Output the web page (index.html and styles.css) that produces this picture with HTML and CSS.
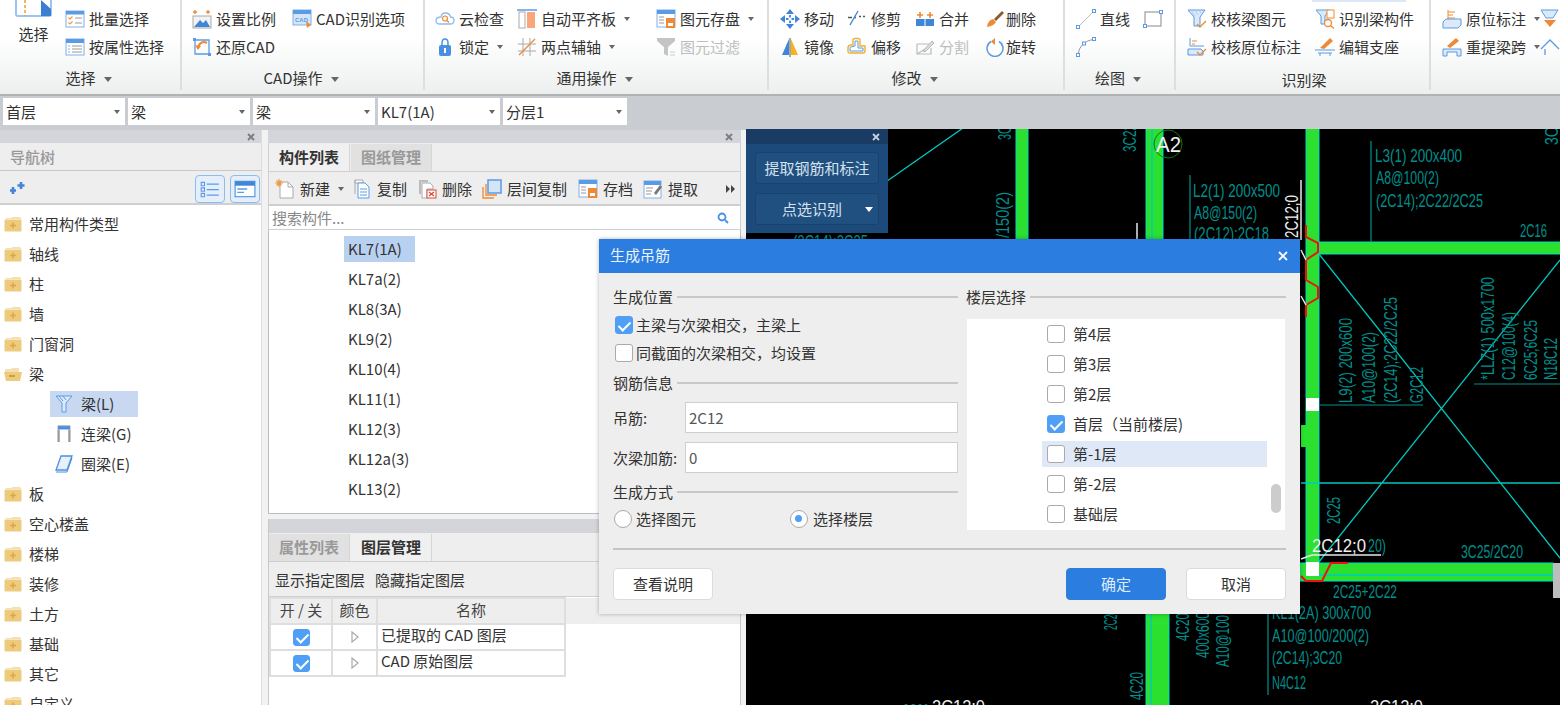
FILE: index.html
```html
<!DOCTYPE html>
<html lang="zh-CN">
<head>
<meta charset="utf-8">
<title>生成吊筋</title>
<link rel="stylesheet" href="styles.css">
</head>
<body>
<svg class="defs" width="0" height="0" aria-hidden="true">
  <symbol id="folder" viewBox="0 0 18 16"><path d="M1 3.500Q1 2 2.500 2H7L8.500 1H15.500Q17 1 17 2.500V3H1Z" fill="#f3dfb0"/><rect x="0.500" y="3.500" width="17" height="12" rx="1" fill="#eecb7c"/><path d="M9 6.500V12.500M6 9.500H12" stroke="#dba94c" stroke-width="1.600"/></symbol>
  <symbol id="close" viewBox="0 0 8 8"><path d="M1 1L7 7M7 1L1 7" stroke="currentColor" stroke-width="1.800"/></symbol>
</svg>

<header class="ribbon">
  <div class="peek"></div>
  <section class="group g1">
    <div class="rows">
      <div class="big">
        <svg class="big-ic" viewBox="0 0 37 17"><rect x="1" y="-5" width="35" height="21" rx="2" fill="#fff" stroke="#9cc4f0" stroke-width="2"/><path d="M10 0V16" stroke="#f0a030" stroke-width="1.500" stroke-dasharray="3 2"/><path d="M26 0L36 9V16H26Z" fill="#3b7fd0"/></svg>
        <span class="big-t">选择</span>
      </div>
      <div class="stack">
        <div class="item"><svg class="ic" viewBox="0 0 20 20"><rect x="1" y="2" width="18" height="16" fill="#fff" stroke="#7fb0ea"/><rect x="1" y="2" width="18" height="3.500" fill="#5a9be6"/><path d="M3.500 8.500L5 10L7.500 7.500M3.500 13.500L5 15L7.500 12.500" fill="none" stroke="#ef9a3c" stroke-width="1.200"/><path d="M10 9H17M10 14H17" stroke="#999"/></svg><span>批量选择</span></div>
        <div class="item"><svg class="ic" viewBox="0 0 20 20"><rect x="1" y="2" width="18" height="16" fill="#fff" stroke="#7fb0ea"/><rect x="1" y="2" width="18" height="4" fill="#5a9be6"/><path d="M7 9H17M7 12H17M7 15H17" stroke="#999"/><path d="M3 9H5M3 12H5M3 15H5" stroke="#7fb0ea"/></svg><span>按属性选择</span></div>
      </div>
    </div>
    <div class="glabel">选择<i class="arr"></i></div>
  </section>

  <section class="group g2">
    <div class="rows">
      <div class="stack">
        <div class="item"><svg class="ic" viewBox="0 0 20 20"><path d="M3 1V5M1 3H5M16 1V5M14 3H18" stroke="#ee8a35" stroke-width="1.300"/><rect x="1" y="7" width="18" height="12" fill="#f2f2f2" stroke="#aaa"/><path d="M2 18L8 11L11 14L14 11L18 18Z" fill="#3f86d8"/></svg><span>设置比例</span></div>
        <div class="item"><svg class="ic" viewBox="0 0 20 20"><path d="M3 3H17V17H3Z" fill="none" stroke="#5a9be6" stroke-width="1.300"/><rect x="1" y="1" width="3" height="3" fill="#5a9be6"/><rect x="16" y="16" width="3" height="3" fill="#5a9be6"/><path d="M15 6Q9 3 6 10" fill="none" stroke="#ee8a35" stroke-width="2"/><path d="M3 8L9 9L6 13Z" fill="#ee8a35"/></svg><span>还原CAD</span></div>
      </div>
      <div class="stack">
        <div class="item"><svg class="ic" viewBox="0 0 20 20"><rect x="1" y="1" width="18" height="15" fill="#d5e5f8" stroke="#7fb0ea"/><rect x="1" y="1" width="18" height="4" fill="#5a9be6"/><text class="cadmini" x="3" y="13">CAD</text><path d="M14 12L19 16L15 19Z" fill="#ee8a35"/></svg><span>CAD识别选项</span></div>
      </div>
    </div>
    <div class="glabel">CAD操作<i class="arr"></i></div>
  </section>

  <section class="group g3">
    <div class="rows">
      <div class="stack">
        <div class="item"><svg class="ic" viewBox="0 0 20 20"><path d="M5 15H15Q19 15 19 11.500Q19 8 15.500 8Q14.500 4 10.500 4Q6.500 4 6 8Q1 8 1 11.500Q1 15 5 15Z" fill="#fff" stroke="#8abcee" stroke-width="1.300"/><circle cx="10" cy="9.500" r="2.500" fill="none" stroke="#ee8a35" stroke-width="1.200"/><path d="M12 11.500L14 13.500" stroke="#ee8a35" stroke-width="1.200"/></svg><span>云检查</span></div>
        <div class="item"><svg class="ic" viewBox="0 0 20 20"><path d="M13 10V6Q13 2 10 2Q7 2 7 6V10" fill="none" stroke="#4a90e2" stroke-width="1.500"/><rect x="4" y="8" width="12" height="11" rx="2" fill="#4a90e2"/><rect x="9" y="11" width="2" height="5" fill="#fff"/></svg><span>锁定</span><i class="arr"></i></div>
      </div>
      <div class="stack">
        <div class="item"><svg class="ic" viewBox="0 0 20 20"><path d="M0 1H20" stroke="#5a9be6" stroke-width="1.500"/><rect x="2" y="3" width="6" height="16" fill="#fff" stroke="#aaa"/><rect x="10" y="3" width="8" height="16" fill="#f9a77a"/></svg><span>自动平齐板</span><i class="arr"></i></div>
        <div class="item"><svg class="ic" viewBox="0 0 20 20"><path d="M6 1V19M13 1V19M1 7H19M1 14H19" stroke="#aaa"/><path d="M2 18L18 2" stroke="#ee8a35" stroke-width="1.200"/></svg><span>两点辅轴</span><i class="arr"></i></div>
      </div>
      <div class="stack">
        <div class="item"><svg class="ic" viewBox="0 0 20 20"><rect x="1" y="1" width="18" height="17" fill="#fff" stroke="#7fb0ea"/><rect x="1" y="1" width="18" height="4" fill="#5a9be6"/><path d="M3 8H8M3 11H8M3 14H8" stroke="#999"/><rect x="10" y="9" width="9" height="10" fill="#ee8a35"/><rect x="12" y="14" width="5" height="3" fill="#fff"/></svg><span>图元存盘</span><i class="arr"></i></div>
        <div class="item off"><svg class="ic" viewBox="0 0 20 20"><path d="M1 1H19V4L12 10V19L8 17V10L1 4Z" fill="#c4c4c4"/><path d="M14 15H19M14 18H19" stroke="#ccc"/></svg><span>图元过滤</span></div>
      </div>
    </div>
    <div class="glabel">通用操作<i class="arr"></i></div>
  </section>

  <section class="group g4">
    <div class="rows">
      <div class="stack">
        <div class="item"><svg class="ic" viewBox="0 0 20 20"><path d="M10 0L14 5H6ZM10 20L6 15H14ZM0 10L5 6V14ZM20 10L15 14V6Z" fill="#3f86d8"/><path d="M10 6V8.500M10 11.500V14M6 10H8.500M11.500 10H14" stroke="#3f86d8" stroke-width="1.800"/></svg><span>移动</span></div>
        <div class="item"><svg class="ic" viewBox="0 0 20 20"><path d="M9 18V2L2 18Z" fill="#3f86d8"/><path d="M11 2V18H18Z" fill="#f7b21c"/><path d="M10 1V20" stroke="#555"/></svg><span>镜像</span></div>
      </div>
      <div class="stack">
        <div class="item"><svg class="ic" viewBox="0 0 20 20"><path d="M1 8.500H5M7 8.500H9" stroke="#555" stroke-width="1.300"/><path d="M3 16L11 2" stroke="#3f86d8" stroke-width="1.400"/><path d="M12 7.500H14M16 7.500H18" stroke="#555" stroke-width="1.300"/></svg><span>修剪</span></div>
        <div class="item"><svg class="ic" viewBox="0 0 20 20"><path d="M6 8V3.500Q6 1.500 8 1.500H11Q13 1.500 13 3.500V9H18V14Q18 16 16 16H3Q1 16 1 14V11Q1 8 4 8Z" fill="#fff" stroke="#f0b030" stroke-width="1.400"/><path d="M8 9V4H11V11H16V14H3V11Q3 10 4 10Z" fill="#fff" stroke="#5a9be6"/></svg><span>偏移</span></div>
      </div>
      <div class="stack">
        <div class="item"><svg class="ic" viewBox="0 0 20 20"><rect x="1" y="10" width="8.500" height="7" fill="#3f86d8"/><rect x="10.500" y="10" width="8.500" height="7" fill="#3f86d8"/><path d="M5 3V9M2 6H8M15 3V9M12 6H18" stroke="#ee8a35" stroke-width="1.600"/></svg><span>合并</span></div>
        <div class="item off"><svg class="ic" viewBox="0 0 20 20"><path d="M2 7H14M2 7V17H16V11M2 17L12 11" fill="none" stroke="#bbb" stroke-width="1.200"/><path d="M8 14L17 4L19 6L10 15Z" fill="#ddd" stroke="#aaa" stroke-width=".8"/></svg><span>分割</span></div>
      </div>
      <div class="stack">
        <div class="item"><svg class="ic" viewBox="0 0 20 20"><path d="M9 10L17 2L19 4L11 12Z" fill="#8a5a2a"/><path d="M2 18Q3 11 8 10L11 13Q9 17 2 18Z" fill="#ee8a35"/></svg><span>删除</span></div>
        <div class="item"><svg class="ic" viewBox="0 0 20 20"><path d="M6 4.500A8 8 0 1 0 14 4.500" fill="#fff" stroke="#5a9be6" stroke-width="1.500"/><path d="M10 1L6 4.500L10 8Z" fill="#ee8a35"/></svg><span>旋转</span></div>
      </div>
    </div>
    <div class="glabel">修改<i class="arr"></i></div>
  </section>

  <section class="group g5">
    <div class="rows">
      <div class="stack">
        <div class="item"><svg class="ic" viewBox="0 0 20 20"><path d="M2 18L18 2" stroke="#bbb"/><rect x="0.500" y="16.500" width="3" height="3" fill="#fff" stroke="#5a9be6"/><rect x="16.500" y="0.500" width="3" height="3" fill="#fff" stroke="#5a9be6"/></svg><span>直线</span></div>
        <div class="item"><svg class="ic" viewBox="0 0 20 20"><path d="M2 18Q3 5 18 2" fill="none" stroke="#999"/><rect x="0.500" y="16.500" width="3" height="3" fill="#fff" stroke="#5a9be6"/><rect x="6.500" y="5" width="3" height="3" fill="#fff" stroke="#5a9be6"/><rect x="16.500" y="0.500" width="3" height="3" fill="#fff" stroke="#5a9be6"/></svg></div>
      </div>
      <div class="stack">
        <div class="item"><svg class="ic" viewBox="0 0 20 20"><rect x="2" y="3" width="16" height="14" fill="none" stroke="#888"/><rect x="16.500" y="1.500" width="3" height="3" fill="#fff" stroke="#5a9be6"/><rect x="0.500" y="15.500" width="3" height="3" fill="#fff" stroke="#5a9be6"/></svg></div>
      </div>
    </div>
    <div class="glabel">绘图<i class="arr"></i></div>
  </section>

  <section class="group g6">
    <div class="rows">
      <div class="stack">
        <div class="item"><svg class="ic" viewBox="0 0 20 20"><path d="M1 1H18L13 8V17H7V8Z" fill="#dbe9f8" stroke="#5a9be6"/><path d="M4 1L8 7M8 1L11 6M12 1L14 4" stroke="#a9ccf2"/><path d="M10 15L13 18L19 12" fill="none" stroke="#ee8a35" stroke-width="1.400"/></svg><span>校核梁图元</span></div>
        <div class="item"><svg class="ic" viewBox="0 0 20 20"><path d="M3 1V9H17" fill="none" stroke="#5a9be6"/><path d="M5 4H10M5 7H8" stroke="#ee8a35"/><path d="M1 12H14L16 14V18H1Z" fill="#dbe9f8" stroke="#5a9be6"/><path d="M10 15L13 18L19 12" fill="none" stroke="#ee8a35" stroke-width="1.400"/></svg><span>校核原位标注</span></div>
      </div>
      <div class="stack">
        <div class="item"><svg class="ic" viewBox="0 0 20 20"><path d="M1 1H14L10 7V15H6V7Z" fill="#dbe9f8" stroke="#5a9be6"/><rect x="12" y="1" width="7" height="8" fill="#fff" stroke="#ee8a35"/><circle cx="13" cy="14" r="3.500" fill="#fff" stroke="#ee8a35" stroke-width="1.300"/><path d="M15.500 16.500L19 19.500" stroke="#ee8a35" stroke-width="1.300"/></svg><span>识别梁构件</span></div>
        <div class="item"><svg class="ic" viewBox="0 0 20 20"><path d="M5 11L15 1L18 4L9 12Z" fill="#ee8a35"/><path d="M0 13H20M3 16H17" stroke="#5a9be6" stroke-width="1.200"/><path d="M5 16V19M15 16V19" stroke="#5a9be6"/></svg><span>编辑支座</span></div>
      </div>
    </div>
    <div class="glabel low">识别梁</div>
  </section>

  <section class="group g7">
    <div class="rows">
      <div class="stack">
        <div class="item"><svg class="ic" viewBox="0 0 20 20"><path d="M6 1V11M6 3H13M6 6H11M6 9H13" fill="none" stroke="#ee8a35"/><path d="M1 13L4 10H19V16L16 19H1Z" fill="#dbe9f8" stroke="#5a9be6"/></svg><span>原位标注</span><i class="arr"></i></div>
        <div class="item"><svg class="ic" viewBox="0 0 20 20"><path d="M5 9L14 1L17 4L8 11Z" fill="#ee8a35"/><path d="M1 19V12H19V19H15V15H5V19Z" fill="#dbe9f8" stroke="#5a9be6"/></svg><span>重提梁跨</span><i class="arr"></i></div>
      </div>
      <div class="stack">
        <div class="item"><svg class="ic" viewBox="0 0 20 20"><path d="M1 1H18L13 9H6Z" fill="#dbe9f8" stroke="#5a9be6"/><path d="M4 11H16L10 18Z" fill="#ee8a35"/></svg></div>
        <div class="item"><svg class="ic" viewBox="0 0 20 20"><path d="M1 12L10 3L19 12M5 12V18" fill="none" stroke="#5a9be6" stroke-width="1.300"/></svg></div>
      </div>
    </div>
  </section>
</header>

<div class="combos">
  <div class="combo">首层<i class="arr"></i></div>
  <div class="combo">梁<i class="arr"></i></div>
  <div class="combo">梁<i class="arr"></i></div>
  <div class="combo">KL7(1A)<i class="arr"></i></div>
  <div class="combo wide">分层1<i class="arr"></i></div>
</div>

<main class="main">
  <aside class="nav pane">
    <div class="strip"><svg class="x"><use href="#close"/></svg></div>
    <div class="nav-title">导航树</div>
    <div class="nav-tools">
      <svg class="spark" viewBox="0 0 16 13"><path d="M4 5V12M1 8.500H7" stroke="#3f86d8" stroke-width="2.600"/><path d="M12 0V7M8.500 3.500H15.500" stroke="#3f86d8" stroke-width="2.600"/></svg>
      <div class="tool-btns">
        <div class="tbtn"><svg viewBox="0 0 20 16"><path d="M2 2H5V5H2ZM2 7H5V10H2ZM2 12H5V15H2Z" fill="none" stroke="#5a9be6"/><path d="M7 3.500H18M7 8.500H18M7 13.500H18" stroke="#5a9be6" stroke-width="1.200"/></svg></div>
        <div class="tbtn"><svg viewBox="0 0 20 16"><rect x="1" y="1" width="18" height="14" fill="#fff" stroke="#4a90e2"/><rect x="1" y="1" width="18" height="4" fill="#3f86d8"/><path d="M3 8H12M3 11H9" stroke="#5a9be6" stroke-width="1.200"/></svg></div>
      </div>
    </div>
    <div class="tree">
      <div class="node"><svg class="fold"><use href="#folder"/></svg>常用构件类型</div>
      <div class="node"><svg class="fold"><use href="#folder"/></svg>轴线</div>
      <div class="node"><svg class="fold"><use href="#folder"/></svg>柱</div>
      <div class="node"><svg class="fold"><use href="#folder"/></svg>墙</div>
      <div class="node"><svg class="fold"><use href="#folder"/></svg>门窗洞</div>
      <div class="node"><svg class="fold" viewBox="0 0 18 16"><path d="M1 3H7L8 2H15V6H1Z" fill="#f3dfb0"/><path d="M0 6H18L16 15H2Z" fill="#eecb7c"/><path d="M5 10H11" stroke="#b99038" stroke-width="1.500"/></svg>梁</div>
      <div class="node sub"><div class="sub-in on"><svg class="fold" viewBox="0 0 18 18"><path d="M1 1H17L11 8V17H7V8Z" fill="#dbe9f8" stroke="#5a9be6"/><path d="M4 1L8 6M8 1L11 5" stroke="#5a9be6"/></svg>梁(L)</div></div>
      <div class="node sub"><div class="sub-in"><svg class="fold" viewBox="0 0 18 20"><rect x="2" y="1" width="14" height="4" fill="#4a90e2"/><path d="M3 5V19M15 5V19" stroke="#999" stroke-width="2.500"/><path d="M2 1H16" stroke="#999"/></svg>连梁(G)</div></div>
      <div class="node sub"><div class="sub-in"><svg class="fold" viewBox="0 0 18 18"><path d="M6 1H17L12 15H1Z" fill="#e8f1fb" stroke="#4a90e2" stroke-width="1.300"/><path d="M1 17H12L17 3" fill="none" stroke="#4a90e2"/></svg>圈梁(E)</div></div>
      <div class="node"><svg class="fold"><use href="#folder"/></svg>板</div>
      <div class="node"><svg class="fold"><use href="#folder"/></svg>空心楼盖</div>
      <div class="node"><svg class="fold"><use href="#folder"/></svg>楼梯</div>
      <div class="node"><svg class="fold"><use href="#folder"/></svg>装修</div>
      <div class="node"><svg class="fold"><use href="#folder"/></svg>土方</div>
      <div class="node"><svg class="fold"><use href="#folder"/></svg>基础</div>
      <div class="node"><svg class="fold"><use href="#folder"/></svg>其它</div>
      <div class="node"><svg class="fold"><use href="#folder"/></svg>自定义</div>
    </div>
  </aside>

  <div class="mid">
    <section class="pane upper">
      <div class="strip"><svg class="x"><use href="#close"/></svg></div>
      <div class="tabs"><div class="tab on">构件列表</div><div class="tab">图纸管理</div></div>
      <div class="comp-tools">
        <div class="item"><svg class="ic" viewBox="0 0 20 20"><path d="M5 3H13L18 8V19H5Z" fill="#fff" stroke="#aaa"/><path d="M13 3V8H18" fill="none" stroke="#aaa"/><path d="M4 0V8M0 4H8M1.500 1.500L6.500 6.500M6.500 1.500L1.500 6.500" stroke="#ee9a3c" stroke-width="1.200"/></svg><span>新建</span><i class="arr"></i></div>
        <div class="item"><svg class="ic" viewBox="0 0 20 20"><path d="M3 1H11V4H3Z" fill="#fff" stroke="#aaa"/><path d="M3 1V15" stroke="#aaa"/><path d="M6 4H13L17 8V19H6Z" fill="#fff" stroke="#5a9be6"/><path d="M8 10H15M8 13H15M8 16H15" stroke="#5a9be6"/></svg><span>复制</span></div>
        <div class="item"><svg class="ic" viewBox="0 0 20 20"><path d="M2 1H11V3H4V15H2Z" fill="#bbb"/><path d="M5 4H13L16 7V10H10V19H5Z" fill="#fff" stroke="#aaa"/><rect x="10" y="11" width="9" height="8" fill="#fff" stroke="#d84a3a"/><path d="M12 13L17 17M17 13L12 17" stroke="#d84a3a" stroke-width="1.300"/></svg><span>删除</span></div>
        <div class="item"><svg class="ic" viewBox="0 0 20 20"><rect x="6" y="1" width="13" height="13" fill="#d5e5f8" stroke="#5a9be6" stroke-width="1.500"/><path d="M4 5V16H15M1 8V19H12" fill="none" stroke="#ee8a35" stroke-width="1.300"/></svg><span>层间复制</span></div>
        <div class="item"><svg class="ic" viewBox="0 0 20 20"><rect x="1" y="1" width="18" height="17" fill="#fff" stroke="#7fb0ea"/><rect x="1" y="1" width="18" height="4" fill="#5a9be6"/><path d="M3 8H8M3 11H8M3 14H8" stroke="#999"/><rect x="10" y="9" width="9" height="10" fill="#ee8a35"/><rect x="12" y="14" width="5" height="3" fill="#fff"/></svg><span>存档</span></div>
        <div class="item"><svg class="ic" viewBox="0 0 20 20"><rect x="1" y="2" width="17" height="17" fill="#fff" stroke="#7fb0ea"/><rect x="1" y="2" width="17" height="4" fill="#5a9be6"/><path d="M3 9H10M3 12H9M3 15H8" stroke="#999"/><path d="M11 14L17 6L19 8L13 16Z" fill="#777"/></svg><span>提取</span></div>
        <svg class="more" viewBox="0 0 9 8"><path d="M0 0L4 4L0 8ZM5 0L9 4L5 8Z" fill="#444"/></svg>
      </div>
      <div class="search"><span>搜索构件...</span><svg class="mag" viewBox="0 0 12 12"><circle cx="5" cy="5" r="3.500" fill="none" stroke="#4a90e2" stroke-width="1.800"/><path d="M8 8L11 11" stroke="#4a90e2" stroke-width="2"/></svg></div>
      <div class="clist">
        <div class="crow on">KL7(1A)</div>
        <div class="crow">KL7a(2)</div>
        <div class="crow">KL8(3A)</div>
        <div class="crow">KL9(2)</div>
        <div class="crow">KL10(4)</div>
        <div class="crow">KL11(1)</div>
        <div class="crow">KL12(3)</div>
        <div class="crow">KL12a(3)</div>
        <div class="crow">KL13(2)</div>
      </div>
    </section>

    <section class="pane lower">
      <div class="strip"></div>
      <div class="tabs"><div class="tab">属性列表</div><div class="tab on">图层管理</div></div>
      <div class="layer-tools"><span>显示指定图层</span><span>隐藏指定图层</span></div>
      <table class="layers">
        <tr><th class="c1">开 / 关</th><th class="c2">颜色</th><th class="c3">名称</th><th class="rest"></th></tr>
        <tr><td class="mid-c"><span class="cb on small"></span></td><td class="mid-c"><svg class="tri" viewBox="0 0 8 12"><path d="M1 1L7 6L1 11Z" fill="#fff" stroke="#aaa" stroke-width="1.200"/></svg></td><td>已提取的 CAD 图层</td><td class="rest"></td></tr>
        <tr><td class="mid-c"><span class="cb on small"></span></td><td class="mid-c"><svg class="tri" viewBox="0 0 8 12"><path d="M1 1L7 6L1 11Z" fill="#fff" stroke="#aaa" stroke-width="1.200"/></svg></td><td>CAD 原始图层</td><td class="rest"></td></tr>
      </table>
    </section>
  </div>

  <div class="canvas">
    <svg class="cad" viewBox="746 129 814 576">
      <rect x="746" y="129" width="814" height="576" fill="#000"/>
      <g class="beam">
        <rect x="1016" y="120" width="12" height="137"/>
        <rect x="1146" y="120" width="17" height="137"/>
        <rect x="1146" y="600" width="23" height="110"/>
        <rect x="1306" y="120" width="13" height="452"/>
        <rect x="1319" y="242" width="250" height="12"/>
        <rect x="1300" y="563" width="253" height="18"/>
      </g>
      <rect class="patch" x="1301" y="425" width="16" height="22"/>
      <g class="cy">
        <path d="M1152 127V250M1151 600V705M1306 575H1553"/>
        <path d="M1319 254L1560 558M1560 260L1318 563M1301 483H1560M880 186L963 128"/>
      </g>
      <g class="tl">
        <path d="M1371 141V242M1319 405H1423M1474 384H1560M1190 175V240M1268 610V695"/>
      </g>
      <rect x="1306" y="398" width="13" height="13" fill="#fff"/>
      <rect x="1306" y="562" width="13" height="14" fill="#fff"/>
      <rect x="1553" y="563" width="7" height="35" fill="#bdbdbd"/>
      <circle cx="1168" cy="144" r="14" fill="none" stroke="#0a7a10"/>
      <g class="red">
        <path d="M1306 225V237L1318 243V252L1306 260V280L1318 287V298L1306 305V317"/>
        <path d="M1301 576L1306 581H1322L1331 563H1348"/>
      </g>
      <g class="wl">
        <path d="M1301 180V240M1137 223V240M1301 559L1312 555H1381M1301 250L1306 260M1301 296L1306 305"/>
      </g>
      <g class="tt">
        <text x="1193" y="197" textLength="87" lengthAdjust="spacingAndGlyphs">L2(1) 200x500</text>
        <text x="1194" y="219" textLength="63" lengthAdjust="spacingAndGlyphs">A8@150(2)</text>
        <text x="1194" y="240" textLength="75" lengthAdjust="spacingAndGlyphs">(2C12);2C18</text>
        <text x="793" y="248" textLength="75" lengthAdjust="spacingAndGlyphs">(2C14);2C25</text>
        <text x="1375" y="162" textLength="87" lengthAdjust="spacingAndGlyphs">L3(1) 200x400</text>
        <text x="1376" y="184" textLength="63" lengthAdjust="spacingAndGlyphs">A8@100(2)</text>
        <text x="1376" y="207" textLength="107" lengthAdjust="spacingAndGlyphs">(2C14);2C22/2C25</text>
        <text x="1520" y="237" textLength="27" lengthAdjust="spacingAndGlyphs">2C16</text>
        <text x="1461" y="558" textLength="62" lengthAdjust="spacingAndGlyphs">3C25/2C20</text>
        <text x="1368" y="552" textLength="18" lengthAdjust="spacingAndGlyphs">20)</text>
        <text x="1333" y="598" textLength="64" lengthAdjust="spacingAndGlyphs">2C25+2C22</text>
        <text x="1272" y="619" textLength="99" lengthAdjust="spacingAndGlyphs">KL1(2A) 300x700</text>
        <text x="1272" y="642" textLength="97" lengthAdjust="spacingAndGlyphs">A10@100/200(2)</text>
        <text x="1272" y="664" textLength="70" lengthAdjust="spacingAndGlyphs">(2C14);3C20</text>
        <text x="1272" y="689" textLength="34" lengthAdjust="spacingAndGlyphs">N4C12</text>
        <text x="903" y="717" textLength="26" lengthAdjust="spacingAndGlyphs">2C20</text>
        <text transform="translate(1011 140) rotate(-90)" textLength="14" lengthAdjust="spacingAndGlyphs">3C</text>
        <text transform="translate(1009 238) rotate(-90)" textLength="46" lengthAdjust="spacingAndGlyphs">/150(2)</text>
        <text transform="translate(1136 152) rotate(-90)" textLength="28" lengthAdjust="spacingAndGlyphs">3C22</text>
        <text transform="translate(1352 403) rotate(-90)" textLength="85" lengthAdjust="spacingAndGlyphs">L9(2) 200x600</text>
        <text transform="translate(1375 403) rotate(-90)" textLength="71" lengthAdjust="spacingAndGlyphs">A10@100(2)</text>
        <text transform="translate(1397 403) rotate(-90)" textLength="106" lengthAdjust="spacingAndGlyphs">(2C14);2C22/2C25</text>
        <text transform="translate(1423 403) rotate(-90)" textLength="36" lengthAdjust="spacingAndGlyphs">G2C12</text>
        <text transform="translate(1494 380) rotate(-90)" textLength="103" lengthAdjust="spacingAndGlyphs">*LLZ(1) 500x1700</text>
        <text transform="translate(1515 380) rotate(-90)" textLength="68" lengthAdjust="spacingAndGlyphs">C12@100(4)</text>
        <text transform="translate(1537 380) rotate(-90)" textLength="60" lengthAdjust="spacingAndGlyphs">6C25;6C25</text>
        <text transform="translate(1557 380) rotate(-90)" textLength="42" lengthAdjust="spacingAndGlyphs">N18C12</text>
        <text transform="translate(1340 524) rotate(-90)" textLength="27" lengthAdjust="spacingAndGlyphs">2C25</text>
        <text transform="translate(1117 630) rotate(-90)" textLength="20" lengthAdjust="spacingAndGlyphs">2C20</text>
        <text transform="translate(1143 700) rotate(-90)" textLength="28" lengthAdjust="spacingAndGlyphs">4C20</text>
        <text transform="translate(1189 641) rotate(-90)" textLength="28" lengthAdjust="spacingAndGlyphs">4C20</text>
        <text transform="translate(1209 658) rotate(-90)" textLength="46" lengthAdjust="spacingAndGlyphs">400x600</text>
        <text transform="translate(1229 667) rotate(-90)" textLength="52" lengthAdjust="spacingAndGlyphs">A10@100</text>
        <text transform="translate(1558 145) rotate(-90)" textLength="18" lengthAdjust="spacingAndGlyphs">3C</text>
      </g>
      <g class="wt">
        <text class="a2" x="1156" y="152" textLength="25" lengthAdjust="spacingAndGlyphs">A2</text>
        <text x="1312" y="552" textLength="54" lengthAdjust="spacingAndGlyphs">2C12;0</text>
        <text x="932" y="713" textLength="53" lengthAdjust="spacingAndGlyphs">2C12;0</text>
        <text x="1370" y="713" textLength="53" lengthAdjust="spacingAndGlyphs">2C12;0</text>
        <text transform="translate(1298 238) rotate(-90)" textLength="43" lengthAdjust="spacingAndGlyphs">2C12;0</text>
      </g>
    </svg>

    <div class="float">
      <div class="float-head"><svg class="x"><use href="#close"/></svg></div>
      <div class="fbtn">提取钢筋和标注</div>
      <div class="fbtn split"><span>点选识别</span><i class="farr"></i></div>
    </div>
  </div>
</main>

<div class="dialog">
  <div class="dlg-title"><span>生成吊筋</span><svg class="dlg-x" viewBox="0 0 10 10"><path d="M1 1L9 9M9 1L1 9" stroke="#fff" stroke-width="1.800"/></svg></div>
  <div class="dlg-body">
    <div class="dlg-cols">
      <div class="col-l">
        <div class="legend"><span>生成位置</span></div>
        <div class="opt first"><span class="cb on"></span>主梁与次梁相交，主梁上</div>
        <div class="opt"><span class="cb"></span>同截面的次梁相交，均设置</div>
        <div class="legend sp5"><span>钢筋信息</span></div>
        <div class="field f1"><label>吊筋:</label><div class="input">2C12</div></div>
        <div class="field"><label>次梁加筋:</label><div class="input">0</div></div>
        <div class="legend sp9"><span>生成方式</span></div>
        <div class="radios">
          <div class="opt"><span class="rd"></span>选择图元</div>
          <div class="opt"><span class="rd on"></span>选择楼层</div>
        </div>
      </div>
      <div class="col-r">
        <div class="legend"><span>楼层选择</span></div>
        <div class="floors">
          <div class="floor"><span class="cb"></span>第4层</div>
          <div class="floor"><span class="cb"></span>第3层</div>
          <div class="floor"><span class="cb"></span>第2层</div>
          <div class="floor"><span class="cb on"></span>首层（当前楼层)</div>
          <div class="floor hl"><span class="cb"></span>第-1层</div>
          <div class="floor"><span class="cb"></span>第-2层</div>
          <div class="floor"><span class="cb"></span>基础层</div>
          <div class="thumb"></div>
        </div>
      </div>
    </div>
    <div class="dlg-rule"></div>
    <div class="dlg-foot">
      <div class="btn">查看说明</div>
      <div class="foot-r"><div class="btn primary">确定</div><div class="btn">取消</div></div>
    </div>
  </div>
</div>
</body>
</html>
```
FILE: styles.css
```css
* { box-sizing: border-box; }
html, body { margin: 0; padding: 0; }
body {
  width: 1560px;
  height: 705px;
  overflow: hidden;
  position: relative;
  font-family: "Noto Sans CJK SC", "Noto Sans", sans-serif;
  font-size: 15px;
  line-height: 20px;
  color: #333;
  background: #f2f2f2;
}
.defs { position: absolute; }
i { font-style: normal; }

/* ribbon */
.ribbon {
  position: relative;
  display: flex;
  height: 96px;
  overflow: hidden;
  background: linear-gradient(#fff 40%, #edefef 100%);
  border-bottom: 2px solid #b0b2b4;
}
.peek { position: absolute; left: 1312px; top: 0; width: 94px; height: 2px; background: #dce8f7; }
.group {
  flex: none;
  height: 90px;
  display: flex;
  flex-direction: column;
  border-right: 2px solid #dcdedf;
}
.rows { display: flex; height: 56px; margin-top: 5px; }
.stack { display: flex; flex-direction: column; gap: 1px; }
.item { display: flex; align-items: center; height: 28px; white-space: nowrap; }
.item.off { color: #bdbdbd; }
.ic { width: 20px; height: 20px; flex: none; margin-right: 4px; }
.arr {
  display: inline-block;
  width: 0;
  height: 0;
  margin-left: 8px;
  border-left: 3.500px solid transparent;
  border-right: 3.500px solid transparent;
  border-top: 4px solid #666;
  vertical-align: middle;
}
.glabel { text-align: center; height: 20px; margin-top: 7px; padding-right: 3px; }
.glabel.low { margin-top: 9px; padding: 0 0 0 3px; }
.glabel .arr { border-left-width: 4.500px; border-right-width: 4.500px; border-top-width: 5px; }
.cadmini { font: 700 6px "Liberation Sans", sans-serif; fill: #5a9be6; }

.g1 { width: 182px; }
.big { width: 65px; padding-left: 15px; margin-top: -5px; }
.big-ic { display: block; width: 37px; height: 17px; }
.big-t { display: block; width: 37px; margin-top: 7px; text-align: center; }
.g2 { width: 243px; }
.g2 .rows { padding-left: 10px; }
.g2 .stack:nth-child(1) { width: 100px; }
.g3 { width: 344px; }
.g3 .rows { padding-left: 10px; }
.g3 .stack:nth-child(1) { width: 82px; }
.g3 .stack:nth-child(2) { width: 139px; }
.g4 { width: 296px; }
.g4 .rows { padding-left: 11px; }
.g4 .stack:nth-child(1) { width: 67px; }
.g4 .stack:nth-child(2) { width: 68px; }
.g4 .stack:nth-child(3) { width: 70px; }
.g4 .stack:nth-child(4) .ic { margin-right: 1px; }
.g5 { width: 111px; }
.g5 .rows { padding-left: 11px; }
.g5 .stack:nth-child(1) { width: 67px; }
.g6 { width: 255px; }
.g6 .rows { padding-left: 11px; }
.g6 .stack:nth-child(1) { width: 128px; }
.g7 { width: 129px; border-right: 0; }
.g7 .rows { padding-left: 11px; }
.g7 .stack:nth-child(1) { width: 109px; }

/* combos */
.combos { display: flex; gap: 3px; height: 31px; padding: 2px 3px; background: #c9ccd1; }
.combo {
  position: relative;
  width: 122px;
  height: 27px;
  line-height: 27px;
  padding-left: 3px;
  background: #fff;
}
.combo.wide { width: 124px; }
.combo .arr { position: absolute; right: 5px; top: 12px; margin: 0; }

/* main */
.main {
  display: flex;
  height: 578px;
  background: linear-gradient(#c9ccd1 3px, #f2f2f2 3px);
}
.pane { display: flex; flex-direction: column; }
.strip {
  position: relative;
  height: 13px;
  background: #d3d5da;
  flex: none;
}
.x {
  position: absolute;
  right: 8px;
  top: 3px;
  width: 8px;
  height: 8px;
  color: #7c7c7c;
}
.nav .x { right: 6px; }
.nav { width: 262px; margin-top: 3px; height: 575px; overflow: hidden; background: #fff; border-right: 1px solid #ddd; }
.nav-title {
  flex: none;
  height: 28px;
  padding-left: 10px;
  line-height: 27px;
  color: #999;
  font-weight: 500;
  background: #eeeeee;
  border-bottom: 1px solid #c8c8c8;
}
.nav-tools {
  flex: none;
  display: flex;
  align-items: center;
  justify-content: space-between;
  height: 34px;
  padding: 3px 1px 0 9px;
  background: #eeeeee;
  border-bottom: 2px solid #cfcfcf;
}
.spark { width: 16px; height: 13px; }
.tool-btns { display: flex; gap: 5px; }
.tbtn {
  display: flex;
  align-items: center;
  justify-content: center;
  width: 30px;
  height: 28px;
  border: 1px solid #8abcee;
  border-radius: 4px;
  background: #e4effb;
}
.tbtn svg { width: 22px; height: 18px; }
.tree { flex: none; padding-top: 4px; }
.node { display: flex; align-items: center; height: 30px; padding-left: 4px; white-space: nowrap; }
.fold { width: 18px; height: 16px; margin-right: 7px; flex: none; }
.node.sub { padding-left: 50px; }
.sub-in { display: flex; align-items: center; width: 88px; height: 26px; padding-left: 5px; }
.sub-in .fold { height: 18px; margin-right: 8px; }
.sub-in.on { background: #c7d8f0; }

.mid { width: 473px; margin-left: 6px; margin-top: 3px; display: flex; flex-direction: column; gap: 5px; }
.upper { height: 384px; flex: none; }
.lower { flex: 1; min-height: 0; overflow: hidden; background: #fff; border-left: 1px solid #c8c8c8; border-right: 1px solid #c8c8c8; }
.lower .strip { height: 14px; }
.tabs {
  display: flex;
  height: 29px;
  flex: none;
  padding-top: 1px;
  gap: 1px;
  background: #eeeeee;
  border-bottom: 1px solid #cfcfcf;
  border-left: 1px solid #cfcfcf;
  border-right: 1px solid #cfcfcf;
}
.lower .tabs { border-left: 0; border-right: 0; }
.tab {
  width: 81px;
  text-align: center;
  line-height: 26px;
  font-weight: 700;
  color: #999;
  background: #e1e1e1;
  border-right: 1px solid #d6d6d6;
}
.tab.on { color: #333; background: #f0f0f0; }
.comp-tools {
  position: relative;
  display: grid;
  grid-template-columns: 77px 65px 65px 96px 65px auto;
  align-items: center;
  height: 34px;
  flex: none;
  padding: 1px 0 0 6px;
  background: #eeeeee;
  border: 1px solid #cfcfcf;
  border-top: 0;
  border-bottom-width: 2px;
}
.comp-tools .ic { margin-right: 5px; }
.more { position: absolute; right: 5px; top: 13px; width: 9px; height: 8px; }
.search {
  display: flex;
  align-items: center;
  justify-content: space-between;
  height: 24px;
  flex: none;
  padding: 1px 11px 0 3px;
  color: #888;
  background: #fff;
  border: 1px solid #cfcfcf;
  border-top: 0;
}
.mag { width: 12px; height: 12px; }
.clist {
  flex: 1;
  padding-top: 4px;
  background: #fff;
  border: 1px solid #bdbdbd;
  border-top: 0;
  overflow: hidden;
}
.crow { height: 30px; display: flex; align-items: center; padding-left: 79px; position: relative; }
.crow.on { margin: 2px 0 2px 75px; height: 26px; width: 71px; padding-left: 4px; background: #b9d1f1; }
.layer-tools {
  display: flex;
  gap: 10px;
  height: 35px;
  flex: none;
  align-items: center;
  padding: 2px 0 0 6px;
  background: #eeeeee;
  border-bottom: 1px solid #cfcfcf;
}
.layers { border-collapse: collapse; width: 472px; table-layout: fixed; }
.layers th, .layers td { border: 2px solid #dedede; padding: 0 0 2px; height: 26px; line-height: 20px; font-weight: 400; }
.layers th { background: #eeeeee; color: #444; }
.layers td { padding: 0 0 4px 3px; color: #333; white-space: nowrap; }
.layers td.mid-c { padding: 0 0 3px; text-align: center; }
.layers .c1 { width: 62px; }
.layers .c2 { width: 45px; }
.layers .c3 { width: 188px; }
.layers th.rest { border: 0; background: #eeeeee; }
.layers td.rest { border: 0; }
.tri { width: 8px; height: 12px; vertical-align: middle; }

/* checkbox / radio */
.cb {
  position: relative;
  display: inline-block;
  flex: none;
  width: 18px;
  height: 18px;
  margin-right: 3px;
  background: #fff;
  border: 1.500px solid #aaa;
  border-radius: 3px;
}
.cb.on { background: #4f9ff6; border-color: #4f9ff6; }
.cb.on::after {
  content: "";
  position: absolute;
  left: 5px;
  top: 1.500px;
  width: 5px;
  height: 10px;
  border: solid #fff;
  border-width: 0 2px 2px 0;
  transform: rotate(45deg);
}
.cb.small { margin: 0; vertical-align: middle; width: 17px; height: 17px; }
.rd {
  position: relative;
  flex: none;
  width: 18px;
  height: 18px;
  margin-right: 4px;
  border: 1.500px solid #aaa;
  border-radius: 50%;
  background: #fff;
}
.rd.on { margin-right: 5px; }
.rd.on::after {
  content: "";
  position: absolute;
  left: 4px;
  top: 4px;
  width: 7px;
  height: 7px;
  border-radius: 50%;
  background: #4f9ff6;
}

/* canvas */
.canvas { position: relative; width: 814px; height: 576px; margin-left: 5px; margin-top: 2px; overflow: hidden; }
.cad { display: block; width: 814px; height: 576px; }
.beam rect { fill: #2be02e; stroke: #00dcc8; stroke-width: 1; }
.patch { fill: #2be02e; }
.cy path { fill: none; stroke: #00c8c0; stroke-width: 1.300; }
.tl path { fill: none; stroke: #00908c; stroke-width: 1.200; }
.red path { fill: none; stroke: #f01010; stroke-width: 2; }
.wl path { fill: none; stroke: #e8e8e8; stroke-width: 1.500; }
.tt text { font: 400 19px "Liberation Sans", sans-serif; fill: #008f8c; }
.wt text { font: 400 19px "Liberation Sans", sans-serif; fill: #f0f0f0; }
.wt text.a2 { font-size: 22px; }
.float {
  position: absolute;
  left: 0;
  top: 0;
  width: 142px;
  height: 104px;
  display: flex;
  flex-direction: column;
  gap: 9px;
  background: #1c4a7a;
}
.float-head {
  position: relative;
  flex: none;
  height: 15px;
  margin-bottom: -1px;
  background: #1a3c64;
}
.float-head .x { top: 4px; color: #c4d0dc; }
.fbtn {
  display: flex;
  align-items: center;
  justify-content: center;
  width: 124px;
  height: 32px;
  flex: none;
  margin-left: 9px;
  color: #d5e2ee;
  background: #20507f;
  border: 1px solid #1a4270;
  border-radius: 3px;
}
.fbtn.split { justify-content: flex-start; padding-left: 26px; position: relative; }
.farr {
  position: absolute;
  right: 5px;
  top: 13px;
  border-left: 4px solid transparent;
  border-right: 4px solid transparent;
  border-top: 5px solid #fff;
}

/* dialog */
.dialog {
  position: absolute;
  left: 599px;
  top: 239px;
  width: 701px;
  height: 375px;
  background: #eeeeee;
  box-shadow: 0 0 4px rgba(0, 0, 0, .3);
}
.dlg-title {
  display: flex;
  align-items: center;
  justify-content: space-between;
  height: 34px;
  padding: 0 12px 2px 11px;
  color: #eaf2fc;
  background: #2b7de0;
}
.dlg-x { width: 10px; height: 10px; margin-top: 2px; }
.dlg-body { padding: 14px 14px 0; }
.dlg-cols { display: flex; gap: 8px; height: 247px; }
.col-l { width: 345px; }
.col-r { width: 320px; }
.legend { display: flex; align-items: center; gap: 4px; height: 20px; }
.legend::after { content: ""; flex: 1; height: 2px; background: #c8c8c8; }
.sp5 { margin-top: 6px; }
.sp9 { margin-top: 9px; }
.opt { display: flex; align-items: center; height: 28px; padding-left: 2px; white-space: nowrap; }
.opt.first { margin-top: 4px; }
.field { display: flex; align-items: center; height: 31px; margin-top: 9px; }
.field label { width: 72px; flex: none; }
.input {
  flex: 1;
  height: 31px;
  line-height: 29px;
  padding-left: 3px;
  color: #555;
  background: #fff;
  border: 1px solid #cfcfcf;
}
.radios { display: flex; margin-top: 3px; }
.radios .opt { padding-left: 1px; }
.radios .opt:first-child { width: 176px; }
.floors {
  position: relative;
  width: 318px;
  height: 211px;
  margin: 12px 0 0 1px;
  padding-top: 2px;
  overflow: hidden;
  background: #fff;
}
.floor {
  display: flex;
  align-items: center;
  width: 225px;
  height: 26px;
  margin: 0 0 4px 75px;
  padding-left: 5px;
}
.floor .cb { margin-right: 8px; }
.floor.hl { background: #dee8f7; }
.thumb { position: absolute; left: 304px; top: 165px; width: 10px; height: 29px; border-radius: 5px; background: #cccccc; }
.dlg-rule { height: 2px; margin-top: 14px; background: #c4c4c4; }
.dlg-foot { display: flex; justify-content: space-between; margin-top: 18px; }
.foot-r { display: flex; gap: 20px; }
.btn {
  width: 100px;
  height: 32px;
  line-height: 30px;
  text-align: center;
  background: #fff;
  border: 1px solid #dcdcdc;
  border-radius: 4px;
}
.btn.primary { color: #dfecfb; background: #2b7de0; border-color: #2b7de0; }
```
